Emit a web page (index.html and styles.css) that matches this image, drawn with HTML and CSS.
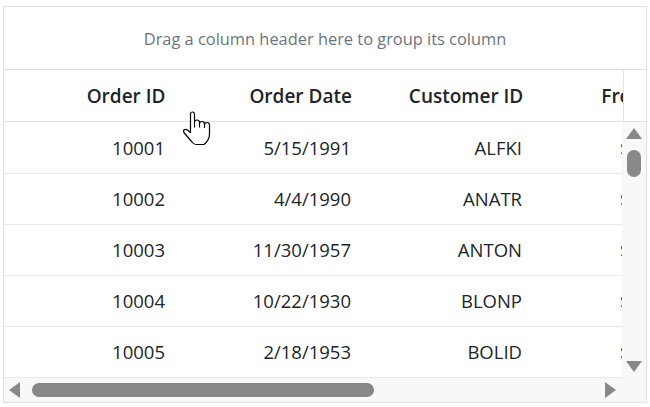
FILE: index.html
```html
<!DOCTYPE html>
<html>
	<head>
		<title>Grid</title>
		<meta charset="utf-8">
		<link rel="stylesheet" href="styles.css">
	</head>
	<body>
		<div class="grid">
			<div class="group-drop">Drag a column header here to group its column</div>
			<div class="header">
				<table class="cols">
					<tr>
						<th class="c1">Order ID</th>
						<th class="c2">Order Date</th>
						<th class="c3">Customer ID</th>
						<th class="c4">Freight</th>
					</tr>
				</table>
				<div class="header-gap"></div>
			</div>
			<div class="content-wrap">
				<div class="content">
					<table class="cols">
						<tr><td class="c1">10001</td><td class="c2">5/15/1991</td><td class="c3">ALFKI</td><td class="c4">$32.38</td></tr>
						<tr><td class="c1">10002</td><td class="c2">4/4/1990</td><td class="c3">ANATR</td><td class="c4">$11.61</td></tr>
						<tr><td class="c1">10003</td><td class="c2">11/30/1957</td><td class="c3">ANTON</td><td class="c4">$65.83</td></tr>
						<tr><td class="c1">10004</td><td class="c2">10/22/1930</td><td class="c3">BLONP</td><td class="c4">$41.34</td></tr>
						<tr><td class="c1">10005</td><td class="c2">2/18/1953</td><td class="c3">BOLID</td><td class="c4">$51.30</td></tr>
					</table>
				</div>
				<div class="vscroll">
					<span class="arrow up"></span>
					<span class="vthumb"></span>
					<span class="fill"></span>
					<span class="arrow down"></span>
				</div>
				<div class="hscroll">
					<span class="arrow left"></span>
					<span class="hthumb"></span>
					<span class="fill"></span>
					<span class="arrow right"></span>
				</div>
				<div class="corner"></div>
			</div>
			<svg class="pointer" width="30" height="36" viewBox="0 0 30 36">
				<path d="M8.5 20 V3 a2 2 0 0 1 4 0 V11.5 a2.5 2.5 0 0 1 5 0 V13 a2.5 2.5 0 0 1 5 0 V14 a2.5 2.5 0 0 1 5 0 V23 q0 6 -5.5 10.5 H14 q-2 0 -4 -2.5 L2.3 22 q-1.5 -2 0 -3.2 q1.8 -1.2 3.5 0.5 L8.5 21.5 Z" fill="#fff" stroke="#000" stroke-width="1.2" stroke-linejoin="round"/>
				<path d="M12.5 11.5 v5 M17.5 13 v3.5 M22.5 14 v3" fill="none" stroke="#000" stroke-width="1.1"/>
			</svg>
		</div>
	</body>
</html>
```

FILE: styles.css
```css
*{
	margin:0;
	padding:0;
	box-sizing:border-box;
}
body{
	background-color:#fff;
	font-family:"Open Sans", "Noto Sans", sans-serif;
	color:#212529;
}
.grid{
	width:644px;
	height:397px;
	margin:6px 0 0 3px;
	border:1px solid #e0e0e0;
	position:relative;
	display:flex;
	flex-direction:column;
}
.group-drop{
	height:63px;
	border-bottom:1px solid #e0e0e0;
	display:flex;
	align-items:center;
	justify-content:center;
	font-size:16.4px;
	color:#6c757d;
}
.header{
	display:flex;
	height:52px;
	border-bottom:1px solid #e0e0e0;
}
.header .cols{
	width:620px;
	border-right:1px solid #e0e0e0;
}
.header-gap{
	flex:1;
}
.cols{
	table-layout:fixed;
	border-collapse:collapse;
	width:618px;
}
th{
	height:51px;
	font-size:19px;
	font-weight:600;
	text-align:right;
	padding-right:21px;
	white-space:nowrap;
	overflow:hidden;
}
td{
	height:51px;
	font-size:18.5px;
	text-align:right;
	padding-right:21px;
	border-bottom:1px solid #e8e8e8;
	white-space:nowrap;
	overflow:hidden;
}
.c1{ width:182px; }
.c2{ width:186px; }
.c3{ width:171px; }
.c4{ width:79px; }
th.c4{
	text-align:left;
	padding:0 0 0 57px;
}
td.c4{
	text-align:left;
	padding:0 0 0 77px;
}
.content-wrap{
	flex:1;
	display:grid;
	grid-template-columns:618px 1fr;
	grid-template-rows:1fr 24px;
	overflow:hidden;
}
.content{
	overflow:hidden;
}
.vscroll{
	background:#f8f8f8;
	display:flex;
	flex-direction:column;
	align-items:center;
	padding:6px 0 6px 0;
}
.hscroll{
	background:#f8f8f8;
	display:flex;
	align-items:center;
	padding:0 6px 0 5px;
}
.corner{
	background:#f8f8f8;
}
.fill{
	flex:1;
}
.arrow{
	width:0;
	height:0;
	display:block;
}
.arrow.up{
	border-left:8px solid transparent;
	border-right:8px solid transparent;
	border-bottom:11px solid #888;
}
.arrow.down{
	border-left:8px solid transparent;
	border-right:8px solid transparent;
	border-top:11px solid #888;
}
.arrow.left{
	border-top:8px solid transparent;
	border-bottom:8px solid transparent;
	border-right:11px solid #888;
}
.arrow.right{
	border-top:8px solid transparent;
	border-bottom:8px solid transparent;
	border-left:11px solid #888;
}
.vthumb{
	display:block;
	width:14px;
	height:27px;
	margin-top:11px;
	border-radius:7px;
	background:#888;
}
.hthumb{
	display:block;
	width:342px;
	height:14px;
	margin-left:12px;
	border-radius:7px;
	background:#888;
}
.pointer{
	position:absolute;
	left:178px;
	top:104px;
}
```
